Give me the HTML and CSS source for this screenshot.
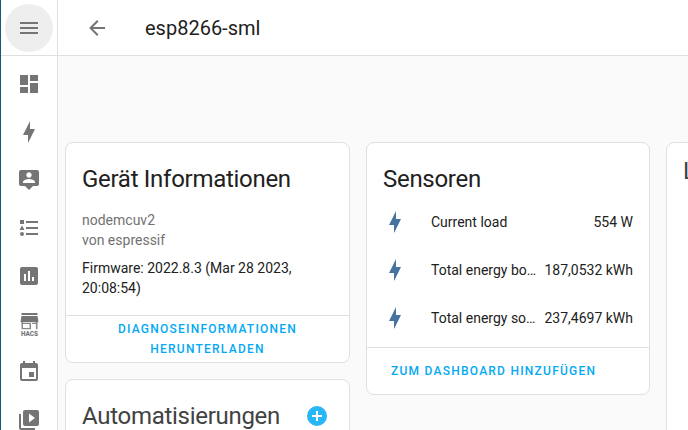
FILE: index.html
```html
<!DOCTYPE html>
<html lang="de">
<head>
<meta charset="utf-8">
<title>esp8266-sml</title>
<link rel="stylesheet" href="styles.css">
</head>
<body>
<div class="app">
  <nav class="sidebar">
    <div class="menu"><button class="menu-button" aria-label="Menü"><svg class="icon" viewBox="0 0 24 24"><path d="M3,6H21V8H3V6M3,11H21V13H3V11M3,16H21V18H3V16Z"/></svg></button></div>
    <a class="nav-item"><svg class="icon" viewBox="0 0 24 24"><path d="M13,3V9H21V3M13,21H21V11H13M3,21H11V15H3M3,13H11V3H3V13Z"/></svg></a>
    <a class="nav-item"><svg class="icon" viewBox="0 0 24 24"><path d="M11,15H6L13,1V9H18L11,23V15Z"/></svg></a>
    <a class="nav-item"><svg class="icon" viewBox="0 0 24 24"><path d="M20,2H4A2,2 0 0,0 2,4V16A2,2 0 0,0 4,18H8L12,22L16,18H20A2,2 0 0,0 22,16V4A2,2 0 0,0 20,2M12,4.3C13.5,4.3 14.7,5.5 14.7,7C14.7,8.5 13.5,9.7 12,9.7C10.5,9.7 9.3,8.5 9.3,7C9.3,5.5 10.5,4.3 12,4.3M18,15H6V14.1C6,12.1 10,11 12,11C14,11 18,12.1 18,14.1V15Z"/></svg></a>
    <a class="nav-item"><svg class="icon" viewBox="0 0 24 24"><path d="M5,9.5L7.5,14H2.5L5,9.5M3,4H7V8H3V4M5,20A2,2 0 0,0 7,18A2,2 0 0,0 5,16A2,2 0 0,0 3,18A2,2 0 0,0 5,20M9,5V7H21V5H9M9,19H21V17H9V19M9,13H21V11H9V13Z"/></svg></a>
    <a class="nav-item"><svg class="icon" viewBox="0 0 24 24"><path d="M9,17H7V10H9V17M13,17H11V7H13V17M17,17H15V13H17V17M19,3H5C3.9,3 3,3.9 3,5V19C3,20.1 3.9,21 5,21H19C20.1,21 21,20.1 21,19V5C21,3.9 20.1,3 19,3Z"/></svg></a>
    <a class="nav-item"><svg class="icon" viewBox="0 0 24 24"><path d="M4.5,1H20.5V3H4.5ZM4.5,4H20.5L21.3,8.5V10.2H3.7V8.5Z"/><path d="M4.5,10H6V16H12.5V12H6V11H14V17.2H4.5ZM18.5,10H20.5V17.2H18.9V12H15V11H18.5Z" opacity=".85"/><text class="hacs" x="4" y="23.5" textLength="17" lengthAdjust="spacingAndGlyphs">HACS</text></svg></a>
    <a class="nav-item"><svg class="icon" viewBox="0 0 24 24"><path d="M19,19H5V8H19M16,1V3H8V1H6V3H5C3.89,3 3,3.89 3,5V19A2,2 0 0,0 5,21H19A2,2 0 0,0 21,19V5C21,3.89 20.1,3 19,3H18V1M17,12H12V17H17V12Z"/></svg></a>
    <a class="nav-item"><svg class="icon" viewBox="0 0 24 24"><path d="M4,6H2V20A2,2 0 0,0 4,22H18V20H4V6M20,2H8A2,2 0 0,0 6,4V16A2,2 0 0,0 8,18H20A2,2 0 0,0 22,16V4A2,2 0 0,0 20,2M12,14.5V5.5L18,10L12,14.5Z"/></svg></a>
  </nav>
  <main class="main">
    <header class="toolbar">
      <svg class="icon" viewBox="0 0 24 24"><path d="M20,11V13H8L13.5,18.5L12.08,19.92L4.16,12L12.08,4.08L13.5,5.5L8,11H20Z"/></svg>
      <h1 class="page-title">esp8266-sml</h1>
    </header>
    <div class="content">
      <div class="column">
        <section class="card info">
          <h2 class="card-title">Gerät Informationen</h2>
          <div class="device">
            <div class="muted">nodemcuv2</div>
            <div class="muted">von espressif</div>
            <div class="firmware">Firmware: 2022.8.3 (Mar 28 2023, 20:08:54)</div>
          </div>
          <div class="actions actions-center"><button class="text-button">Diagnoseinformationen herunterladen</button></div>
        </section>
        <section class="card">
          <h2 class="card-title card-title-soft">Automatisierungen
            <svg class="icon add" viewBox="0 0 24 24"><path d="M17,13H13V17H11V13H7V11H11V7H13V11H17M12,2A10,10 0 0,0 2,12A10,10 0 0,0 12,22A10,10 0 0,0 22,12A10,10 0 0,0 12,2Z"/></svg>
          </h2>
        </section>
      </div>
      <div class="column column-middle">
        <section class="card">
          <h2 class="card-title">Sensoren</h2>
          <div class="rows">
            <div class="row"><svg class="icon flash" viewBox="0 0 24 24"><path d="M11,15H6L13,1V9H18L11,23V15Z"/></svg><span class="name">Current load</span><span class="value">554 W</span></div>
            <div class="row"><svg class="icon flash" viewBox="0 0 24 24"><path d="M11,15H6L13,1V9H18L11,23V15Z"/></svg><span class="name">Total energy bo…</span><span class="value">187,0532 kWh</span></div>
            <div class="row"><svg class="icon flash" viewBox="0 0 24 24"><path d="M11,15H6L13,1V9H18L11,23V15Z"/></svg><span class="name">Total energy so…</span><span class="value">237,4697 kWh</span></div>
          </div>
          <div class="actions actions-tall"><button class="text-button">Zum Dashboard hinzufügen</button></div>
        </section>
      </div>
      <div class="column">
        <section class="card logbook">
          <h2 class="card-title card-title-soft">Logbuch</h2>
        </section>
      </div>
    </div>
  </main>
</div>
</body>
</html>
```
FILE: styles.css
```css
* { box-sizing: border-box; }
body {
  margin: 0;
  height: 430px;
  overflow: hidden;
  background: #fafafa;
  color: #212121;
  font: 14px/20px Roboto, sans-serif;
}
h1, h2 { margin: 0; font-weight: 400; }
button { border: 0; padding: 0; background: none; font: inherit; }
.app { display: flex; height: 430px; border-left: 1px solid #1a5578; overflow: hidden; }
.icon { width: 24px; height: 24px; fill: #757575; flex: none; display: block; }

.sidebar {
  width: 57px;
  flex: none;
  background: #fff;
  border-right: 1px solid #e0e0e0;
}
.menu {
  height: 56px;
  padding: 4px;
  border-bottom: 1px solid #e0e0e0;
}
.menu-button {
  display: flex;
  align-items: center;
  justify-content: center;
  width: 48px;
  height: 48px;
  border-radius: 50%;
  background: #eee;
}
.nav-item { display: flex; height: 48px; padding: 0 16px; align-items: center; }
.nav-item:nth-child(2) { margin-top: 4px; }
.hacs { font: 900 6.4px Roboto, sans-serif; }

.main { flex: 1; min-width: 0; }
.toolbar {
  display: flex;
  align-items: center;
  gap: 36px;
  height: 56px;
  padding-left: 27px;
  background: #fff;
  border-bottom: 1px solid #e0e0e0;
}
.page-title { font-size: 20px; line-height: 28px; }

.content {
  display: flex;
  align-items: flex-start;
  gap: 16px;
  padding: 86px 0 0 7px;
}
.column { display: flex; flex-direction: column; gap: 16px; width: 285px; flex: none; }
.column-middle { width: 284px; }
.card {
  background: #fff;
  border: 1px solid #e0e0e0;
  border-radius: 8px;
  overflow: hidden;
}
.card-title {
  display: flex;
  align-items: center;
  justify-content: space-between;
  height: 67px;
  padding: 5px 20px 0 16px;
  font-size: 24px;
  line-height: 48px;
  letter-spacing: -0.012em;
}
.card-title-soft { color: #424242; }
.add { fill: #29b6f6; }
.device { padding: 0 16px 17px; }
.muted { color: #727272; }
.firmware { margin-top: 8px; }
.actions {
  display: flex;
  align-items: center;
  height: 47px;
  border-top: 1px solid #e0e0e0;
}
.actions-center { justify-content: center; padding: 0 16px; }
.actions-tall { padding-left: 24px; }
.text-button {
  color: #03a9f4;
  font-size: 12px;
  font-weight: 500;
  line-height: 20px;
  letter-spacing: 1.24px;
  text-transform: uppercase;
}
.rows { padding: 0 16px 0; margin-top: -12px; margin-bottom: 5px; }
.row { display: flex; align-items: center; height: 48px; }
.flash { fill: #44739e; }
.name {
  flex: 1;
  min-width: 0;
  margin-left: 24px;
  white-space: nowrap;
}
.value { margin-left: 8px; white-space: nowrap; }
.logbook { height: 320px; }
.logbook .card-title { height: 56px; padding: 0 16px; }
```
